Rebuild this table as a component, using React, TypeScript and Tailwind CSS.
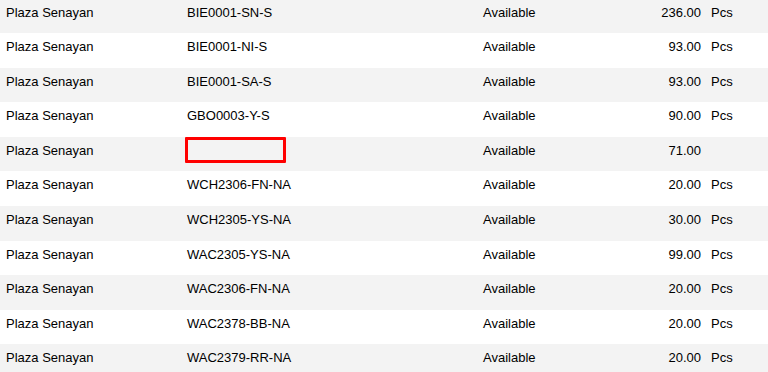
import React from 'react';

interface StockRow {
  location: string;
  sku: string | null;
  status: string;
  qty: string;
  unit: string;
}

const rows: StockRow[] = [
  { location: 'Plaza Senayan', sku: 'BIE0001-SN-S', status: 'Available', qty: '236.00', unit: 'Pcs' },
  { location: 'Plaza Senayan', sku: 'BIE0001-NI-S', status: 'Available', qty: '93.00', unit: 'Pcs' },
  { location: 'Plaza Senayan', sku: 'BIE0001-SA-S', status: 'Available', qty: '93.00', unit: 'Pcs' },
  { location: 'Plaza Senayan', sku: 'GBO0003-Y-S', status: 'Available', qty: '90.00', unit: 'Pcs' },
  { location: 'Plaza Senayan', sku: null, status: 'Available', qty: '71.00', unit: '' },
  { location: 'Plaza Senayan', sku: 'WCH2306-FN-NA', status: 'Available', qty: '20.00', unit: 'Pcs' },
  { location: 'Plaza Senayan', sku: 'WCH2305-YS-NA', status: 'Available', qty: '30.00', unit: 'Pcs' },
  { location: 'Plaza Senayan', sku: 'WAC2305-YS-NA', status: 'Available', qty: '99.00', unit: 'Pcs' },
  { location: 'Plaza Senayan', sku: 'WAC2306-FN-NA', status: 'Available', qty: '20.00', unit: 'Pcs' },
  { location: 'Plaza Senayan', sku: 'WAC2378-BB-NA', status: 'Available', qty: '20.00', unit: 'Pcs' },
  { location: 'Plaza Senayan', sku: 'WAC2379-RR-NA', status: 'Available', qty: '20.00', unit: 'Pcs' },
];

function Row({ row, striped }: { row: StockRow; striped: boolean }) {
  return (
    <div className={`flex h-[34.6px] shrink-0 items-start ${striped ? 'bg-[#f3f3f3]' : 'bg-white'}`}>
      <div className="w-[185px] shrink-0 pl-[6px] pt-[6px]">{row.location}</div>
      <div className="w-[298px] shrink-0">
        {row.sku ? (
          <div className="pl-[2px] pt-[6px]">{row.sku}</div>
        ) : (
          <div className="mt-[0.5px] h-[26px] w-[101px] rounded-[1px] border-[3px] border-[#ff0000]" />
        )}
      </div>
      <div className="w-[130px] shrink-0 pt-[6px]">{row.status}</div>
      <div className="w-[88px] shrink-0 pt-[6px] text-right">{row.qty}</div>
      <div className="pl-[10px] pt-[6px]">{row.unit}</div>
    </div>
  );
}

export default function App() {
  return (
    <div className="h-[372px] w-[768px] overflow-hidden bg-white font-['Liberation_Sans',Arial,sans-serif] text-[13px] leading-[15px] text-black">
      <div className="-mt-[1.5px] flex flex-col">
        {rows.map((row, i) => (
          <Row key={i} row={row} striped={i % 2 === 0} />
        ))}
      </div>
    </div>
  );
}
